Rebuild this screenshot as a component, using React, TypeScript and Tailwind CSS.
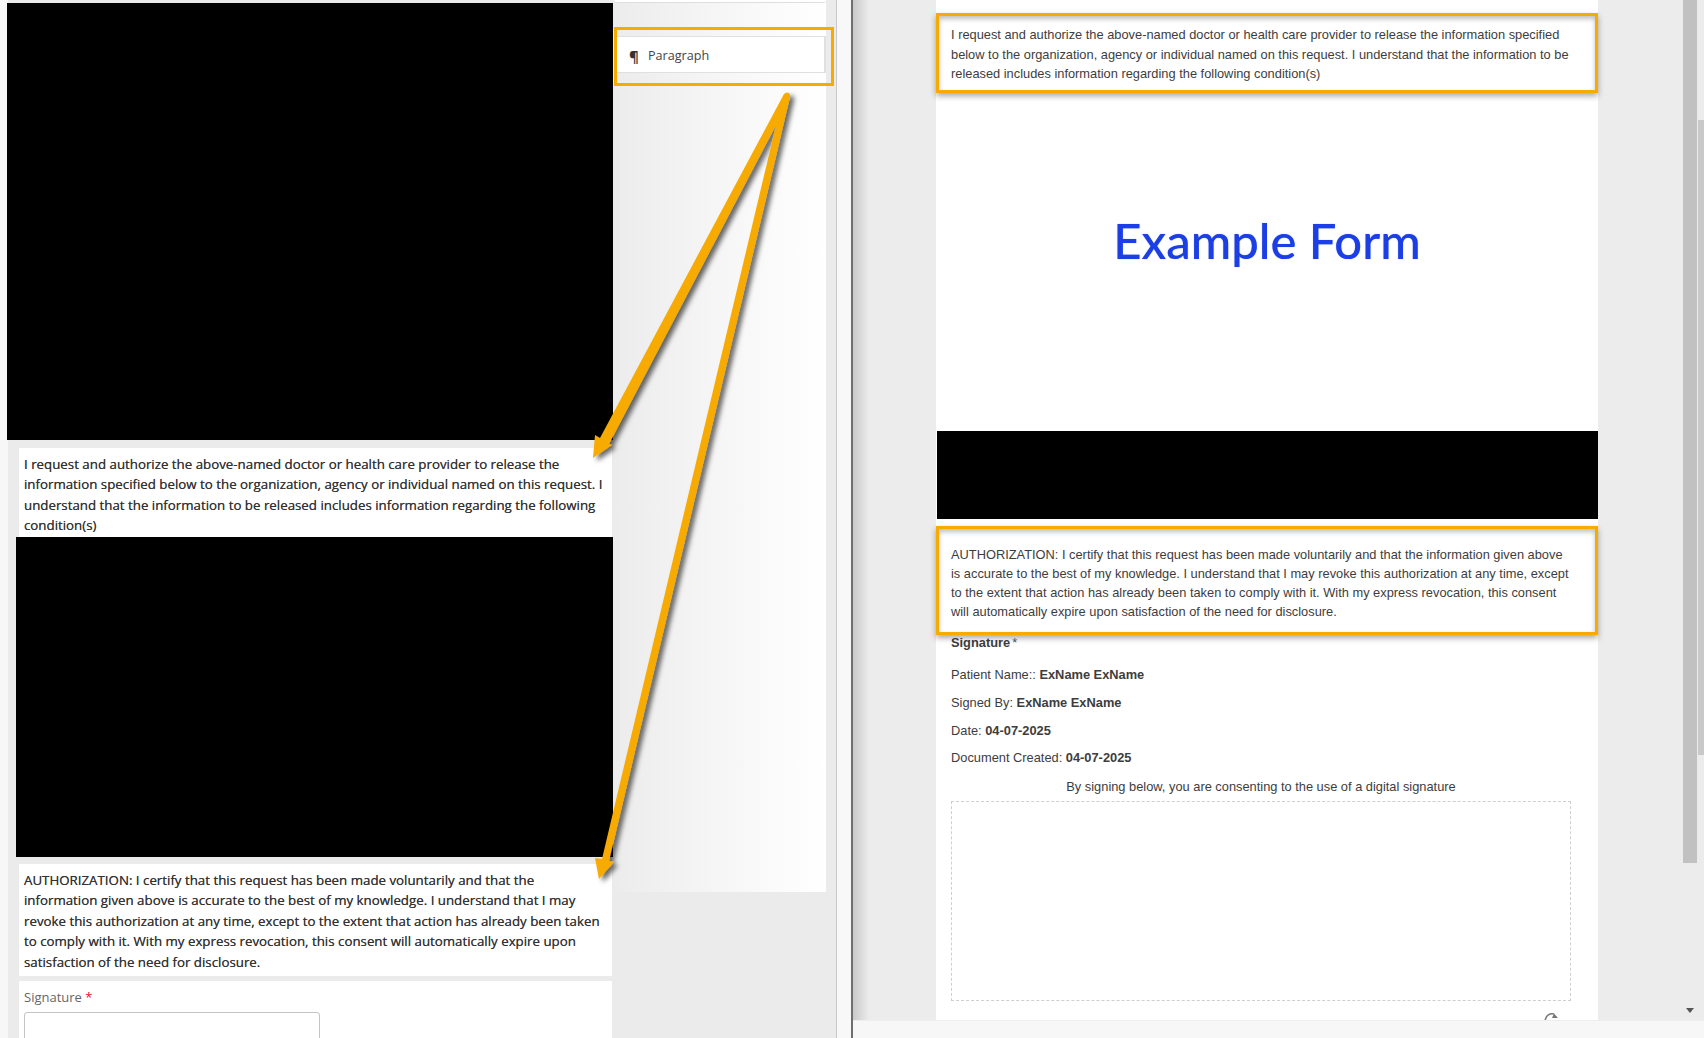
const REQ_LEFT = "I request and authorize the above-named doctor or health care provider to release the information specified below to the organization, agency or individual named on this request. I understand that the information to be released includes information regarding the following condition(s)";
const AUTH = "AUTHORIZATION: I certify that this request has been made voluntarily and that the information given above is accurate to the best of my knowledge. I understand that I may revoke this authorization at any time, except to the extent that action has already been taken to comply with it. With my express revocation, this consent will automatically expire upon satisfaction of the need for disclosure.";

function Arrows() {
  return (
    <svg className="absolute left-0 top-0 pointer-events-none" width="860" height="900" viewBox="0 0 860 900">
      <defs>
        <filter id="sh" x="-10%" y="-5%" width="120%" height="110%">
          <feDropShadow dx="4" dy="3" stdDeviation="2.4" floodColor="#000" floodOpacity="0.6" />
        </filter>
      </defs>
      <path
        filter="url(#sh)"
        fill="#f7ab00"
        d="M784 94 Q787 91 790 94 L790 97 L609 861 L614 862 L599 879 L595 858 L602 859 L776 125 L609 444 L612 445 L593 458 L595 435 L600 438 Z"
      />
    </svg>
  );
}

function LeftPane() {
  const txt = "font-['Open_Sans','Noto_Sans',sans-serif] text-[13.3px] leading-[20.4px] text-[#333] font-medium [text-shadow:0_0_0.5px_#555]";
  return (
    <div className="relative flex w-[837px] shrink-0 h-full overflow-hidden bg-[#ebebeb] border-r border-[#c9c9c9]">
      <div className="flex flex-col w-[613px] shrink-0 bg-[linear-gradient(to_right,#f7f7f7_8px,#ebebeb_8px)] pt-[3px] pl-[7px]">
        <div className="w-[606px] h-[437px] bg-black shrink-0" />
        <div className={`ml-[12px] mt-2 w-[593px] h-[89px] bg-white pl-[5px] pr-[7px] pt-[6px] shrink-0 ${txt}`}>
          {REQ_LEFT}
        </div>
        <div className="ml-[9px] w-[597px] h-[320px] bg-black shrink-0" />
        <div className={`ml-[12px] mt-[7px] w-[593px] h-[112px] bg-white pl-[5px] pr-[7px] pt-[6px] shrink-0 ${txt}`}>
          {AUTH}
        </div>
        <div className="ml-[12px] mt-[5px] w-[593px] flex-1 bg-white pl-[5px] pt-[6px]">
          <div className="font-['Open_Sans','Noto_Sans',sans-serif] text-[13px] leading-[20px] text-[#666]">
            Signature <span className="text-[#d9112b]">*</span>
          </div>
          <div className="mt-[5px] w-[296px] h-[60px] bg-white border border-[#c4c4c4] rounded-[3px]" />
        </div>
      </div>
      <div className="w-[213px] h-[892px] shrink-0 bg-gradient-to-r from-[#ececec] via-[#f6f6f6] to-white">
        <div className="h-[3px] ml-px bg-white border-b border-[#dedede] rounded-b" />
        <div className="mt-[33px] h-[37px] ml-px bg-white border-y border-r-2 border-[#e0e0e0] flex items-center pl-[15px] pt-[3px] font-['Open_Sans','Noto_Sans',sans-serif] text-[12.6px] text-[#444]">
          <span className="w-[19px] text-[15px] leading-none text-[#333] font-bold">¶</span>
          <span>Paragraph</span>
        </div>
      </div>
    </div>
  );
}

function RightPane() {
  const rows: [string, string, string][] = [
    ["Patient Name:: ", "ExName ExName", "h-[28px]"],
    ["Signed By: ", "ExName ExName", "h-[28px]"],
    ["Date: ", "04-07-2025", "h-[27px]"],
    ["Document Created: ", "04-07-2025", "h-[29px]"],
  ];
  return (
    <div className="flex-1 h-full flex flex-col overflow-hidden relative bg-[#ececec] border-l-[2px] border-[#6e6e6e] ml-[14px]">
      <div className="flex-1 flex min-h-0 relative">
        <div className="absolute left-0 top-0 bottom-0 w-[16px] bg-gradient-to-r from-[#c9c9c9] to-[#ececec]" />
        <div className="w-[83px] shrink-0" />
        <div className="w-[662px] shrink-0 h-full bg-white overflow-hidden font-['Liberation_Sans',Arial,sans-serif] text-[12.83px] text-[#3d3d3d] leading-[19px]">
          <div className="h-[13px]" />
          <div className="pl-[15px] pr-[27px] h-[80px] pt-[12px] leading-[19.5px]">
            I request and authorize the above-named doctor or health care provider to release the information specified below to the organization, agency or individual named on this request. I understand that the information to be released includes information regarding the following condition(s)
          </div>
          <div className="h-[338px] flex items-start justify-center pt-[123px]">
            <span className="font-['Lato','Noto_Sans',sans-serif] text-[49px] leading-none font-medium text-[#1b3fe4] [text-shadow:0_0_1px_#6b84f0]">
              Example Form
            </span>
          </div>
          <div className="h-[88px] ml-px bg-black" />
          <div className="h-[8px]" />
          <div className="pl-[15px] pr-[27px] h-[109px] pt-[18px]">{AUTH}</div>
          <div className="px-[15px] h-[24px] font-bold -mt-[3px]">
            Signature<span className="font-normal ml-[2px] text-[#555]">*</span>
          </div>
          <div className="h-[8px]" />
          {rows.map(([a, b, h]) => (
            <div key={a} className={`px-[15px] ${h}`}>
              {a}
              <span className="font-bold">{b}</span>
            </div>
          ))}
          <div className="pl-[15px] w-[635px] text-center h-[24px]">By signing below, you are consenting to the use of a digital signature</div>
          <div className="ml-[15px] w-[620px] h-[200px] border border-dashed border-[#cfcfcf]" />
          <div className="ml-[606px] mt-[10px]">
            <svg width="18" height="18" viewBox="0 0 18 18" fill="none">
              <path d="M3 10C4 4 8 2 12 3" stroke="#777" strokeWidth="1.5" />
              <path d="M12 2.5L16 7L10 7Z" fill="#777" />
            </svg>
          </div>
        </div>
        <div className="flex-1 bg-[#ececec]" />
        <div className="w-[21px] shrink-0 relative">
          <div className="w-[14px] h-[863px] bg-[#c1c1c1]" />
          <div className="absolute left-[15px] top-[120px] w-[6px] h-[635px] bg-[#c9c9c9]" />
          <div className="absolute left-[3px] bottom-[7px] w-0 h-0 border-x-[4px] border-x-transparent border-t-[5px] border-t-[#555]" />
        </div>
      </div>
      <div className="h-[18px] bg-[#f7f7f7] border-t border-[#eeeeee] shrink-0" />
    </div>
  );
}

export default function App() {
  return (
    <div className="relative flex w-[1704px] h-[1038px] overflow-hidden bg-[#f8f8f8]">
      <LeftPane />
      <RightPane />
      <Arrows />
      <div className="absolute left-[614px] top-[27px] w-[220px] h-[59px] border-[3px] border-[#f7ab00]" />
      <div className="absolute left-[936px] top-[13px] w-[662px] h-[80px] border-[3px] border-[#f7ab00] shadow-[0_3px_6px_rgba(0,0,0,0.35),inset_0_3px_5px_rgba(0,0,0,0.25)]" />
      <div className="absolute left-[936px] top-[526px] w-[662px] h-[109px] border-[3px] border-[#f7ab00] shadow-[0_3px_6px_rgba(0,0,0,0.35),inset_0_3px_5px_rgba(0,0,0,0.25)]" />
    </div>
  );
}
